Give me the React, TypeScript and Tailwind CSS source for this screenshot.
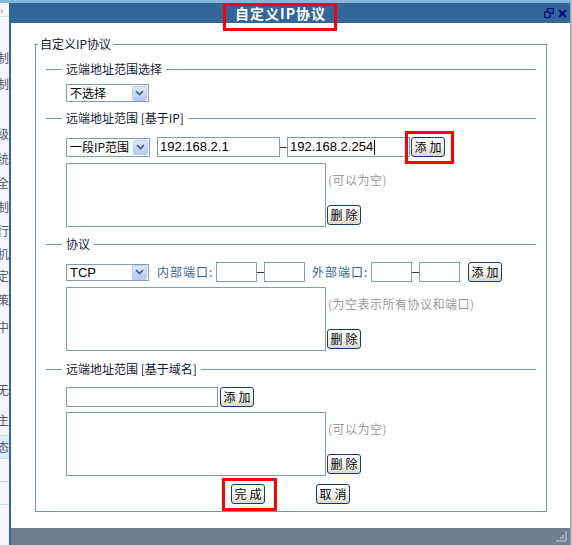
import React from 'react';

const sans = "font-['Noto_Sans_CJK_SC','Noto_Sans',sans-serif]";
const latin = "font-['Liberation_Sans','Noto_Sans_CJK_SC',sans-serif]";

function Btn({ label, className = '' }: { label: string; className?: string }) {
  const [a, b] = label.split(' ');
  return (
    <div
      className={`w-[34px] h-[20px] flex items-center justify-center gap-[3px] shrink-0 rounded-[3px] border border-[#0f3d72] bg-gradient-to-b from-white via-[#f6f5ef] to-[#dcd9cb] text-[12px] leading-none text-black ${className}`}
    >
      <span>{a}</span>
      <span>{b}</span>
    </div>
  );
}

function Select({ value, w, h, font = sans, size = 'text-[12px]' }: { value: string; w: string; h: string; font?: string; size?: string }) {
  return (
    <div className={`${w} ${h} shrink-0 flex items-center border border-[#7f9db9] bg-white`}>
      <span className={`flex-1 pl-[3px] ${size} leading-none text-black whitespace-nowrap overflow-hidden ${font}`}>{value}</span>
      <div className="w-[15px] h-[15px] mr-[1px] shrink-0 flex items-center justify-center rounded-[2px] border border-[#b7cbf2] bg-gradient-to-b from-[#e2eafc] to-[#b3c9f4]">
        <svg width="9" height="6" viewBox="0 0 9 6">
          <path d="M1 1.2 L4.5 4.6 L8 1.2" fill="none" stroke="#4a5f8a" strokeWidth="1.8" />
        </svg>
      </div>
    </div>
  );
}

function Section({ title, className = '' }: { title: string; className?: string }) {
  return (
    <div className={`flex items-center h-[14px] ${className}`}>
      <div className="w-[16px] h-px bg-[#7394b8]" />
      <span className="px-[4px] leading-[14px] text-[#111a33] whitespace-nowrap">{title}</span>
      <div className="flex-1 h-px bg-[#7394b8]" />
    </div>
  );
}

function Input({ w, value, caret }: { w: string; value?: string; caret?: boolean }) {
  return (
    <div className={`${w} h-[20px] shrink-0 flex items-center border border-[#7f9db9] bg-white pl-[2px] ${latin} text-[13px] text-black`}>
      {value}
      {caret && <span className="ml-[1px] w-px h-[15px] bg-black" />}
    </div>
  );
}

function Dash() {
  return (
    <div className="w-[7px] h-[20px] shrink-0 flex items-center">
      <div className="w-full h-px bg-[#2c3a50]" />
    </div>
  );
}

function ListBox({ hint, className = '' }: { hint: string; className?: string }) {
  return (
    <div className={`flex ml-[20px] h-[64px] ${className}`}>
      <div className="w-[260px] h-full border border-[#7f9db9] bg-white" />
      <div className="ml-[1px] flex flex-col justify-between">
        <span className="mt-[10px] pl-[1px] leading-[14px] text-[#999999] whitespace-nowrap tracking-[0.5px]">{hint}</span>
        <Btn label="删 除" className="mb-[2px] h-[19px]" />
      </div>
    </div>
  );
}

function LeftStrip() {
  const rows: [string, string][] = [
    ['h-[28px]', ''],
    ['h-[26px]', '制'],
    ['h-[26px]', '制'],
    ['h-[24px]', ''],
    ['h-[26px]', '级'],
    ['h-[24px]', '统'],
    ['h-[24px]', '全'],
    ['h-[24px]', '制'],
    ['h-[24px]', '行'],
    ['h-[22px]', '机'],
    ['h-[22px]', '定'],
    ['h-[26px]', '策'],
    ['h-[28px]', '中'],
    ['h-[34px]', ''],
    ['h-[30px]', '无'],
    ['h-[30px]', '主'],
  ];
  return (
    <div className="w-[9px] shrink-0 flex flex-col overflow-hidden bg-[#f4f6f9] text-[12px] text-[#55556a]">
      <div className="h-[14px] border-b border-[#dde3ea] flex items-center text-[10px] text-[#888]">›</div>
      {rows.map(([h, c], i) => (
        <div key={i} className={`${h} flex items-center whitespace-nowrap -ml-[3px]`}>
          {c}
        </div>
      ))}
      <div className="h-[24px] flex items-center -ml-[3px] bg-[#ddecfa] border-y border-[#c4dcf2]">态</div>
      <div className="h-[23px] border-b border-[#c4dcf2]" />
      <div className="h-[23px] border-b border-[#c4dcf2]" />
    </div>
  );
}

export default function App() {
  return (
    <div className={`relative w-[572px] h-[545px] overflow-hidden bg-[#f4f6f9] ${sans} text-[12px]`}>
      <div className="h-[3px] bg-[#86b8de]" />
      <div className="flex h-[542px]">
        <LeftStrip />
        <div className="w-[562px] shrink-0 flex flex-col border-l-2 border-l-[#336699] border-r border-r-[#9aaabb] bg-white">
          {/* title bar */}
          <div className="h-[20px] shrink-0 flex items-center bg-[#336699]">
            <div className="flex-1 flex justify-center pl-[6px]">
              <span className="text-white font-bold text-[14px] leading-none tracking-[1px]">自定义IP协议</span>
            </div>
            <svg width="10" height="10" viewBox="0 0 10 10" className="mr-[4px]">
              <rect x="3.5" y="0.5" width="6" height="5" fill="none" stroke="#000a80" strokeWidth="1.3" />
              <rect x="0.5" y="4" width="5.5" height="5.5" fill="#336699" stroke="#000a80" strokeWidth="1.3" />
            </svg>
            <svg width="9" height="9" viewBox="0 0 9 9" className="mr-[3px]">
              <path d="M1 1 L8 8 M8 1 L1 8" stroke="#000a80" strokeWidth="2" />
            </svg>
          </div>

          {/* body */}
          <div className="flex-1">
            <fieldset className="mt-[14px] ml-[24px] w-[512px] border border-[#7394b8] px-[10px] pb-[8px]">
              <legend className="ml-[-8px] px-[2px] leading-[14px] text-[#111a33]">自定义IP协议</legend>

              <Section title="远端地址范围选择" className="mt-[11px]" />
              <div className="ml-[20px] mt-[8px]">
                <Select value="不选择" w="w-[83px]" h="h-[18px]" />
              </div>

              <Section title="远端地址范围 [基于IP]" className="mt-[9px]" />
              <div className="ml-[20px] mt-[12px] flex items-center h-[20px]">
                <Select value="一段IP范围" w="w-[84px]" h="h-[19px]" />
                <div className="ml-[7px]">
                  <Input w="w-[123px]" value="192.168.2.1" />
                </div>
                <Dash />
                <Input w="w-[123px]" value="192.168.2.254" caret />
                <Btn label="添 加" className="ml-[1px]" />
              </div>
              <ListBox hint="(可以为空)" className="mt-[6px]" />

              <Section title="协议" className="mt-[10px]" />
              <div className="ml-[20px] mt-[11px] flex items-center h-[20px]">
                <Select value="TCP" w="w-[83px]" h="h-[17px]" font={latin} size="text-[13px]" />
                <span className="ml-[8px] w-[59px] text-[#336699] whitespace-nowrap tracking-[1px]">内部端口:</span>
                <Input w="w-[41px]" />
                <Dash />
                <Input w="w-[41px]" />
                <span className="ml-[7px] w-[59px] text-[#336699] whitespace-nowrap tracking-[1px]">外部端口:</span>
                <Input w="w-[41px]" />
                <Dash />
                <Input w="w-[41px]" />
                <Btn label="添 加" className="ml-[8px]" />
              </div>
              <ListBox hint="(为空表示所有协议和端口)" className="mt-[5px]" />

              <Section title="远端地址范围 [基于域名]" className="mt-[11px]" />
              <div className="ml-[20px] mt-[11px] flex items-center h-[20px]">
                <Input w="w-[152px]" />
                <Btn label="添 加" className="ml-[2px]" />
              </div>
              <ListBox hint="(可以为空)" className="mt-[5px]" />

              <div className="ml-[20px] mt-[8px] flex h-[19px]">
                <Btn label="完 成" className="ml-[165px] h-[19px]" />
                <Btn label="取 消" className="ml-[51px] h-[19px]" />
              </div>
            </fieldset>
          </div>

          {/* status bar */}
          <div className="h-[17px] shrink-0 flex items-end justify-end bg-[#708090] pr-[3px] pb-[3px]">
            <svg width="11" height="11" viewBox="0 0 11 11">
              <path d="M10 0 V10 H0" fill="none" stroke="#c9d1d9" strokeWidth="1" />
              <path d="M7 4 V7 H4" fill="none" stroke="#c9d1d9" strokeWidth="1" />
            </svg>
          </div>
        </div>
        <div className="flex-1 bg-[#a8bdd1]" />
      </div>

      {/* red annotation boxes */}
      <div className="absolute left-[223px] top-[3px] w-[114px] h-[28px] border-[3px] border-[#ff0000]" />
      <div className="absolute left-[405px] top-[131px] w-[49px] h-[33px] border-[3px] border-[#ff0000]" />
      <div className="absolute left-[222px] top-[478px] w-[55px] h-[33px] border-[3px] border-[#ff0000]" />
    </div>
  );
}
